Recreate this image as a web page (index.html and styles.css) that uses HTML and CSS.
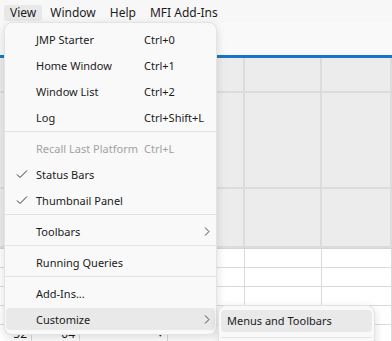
FILE: index.html
```html
<!DOCTYPE html>
<html lang="en">

<head>
    <meta charset="UTF-8">
    <meta name="viewport" content="width=device-width, initial-scale=1.0">
    <title>View menu</title>
    <link rel="stylesheet" href="styles.css">
</head>

<body>
    <div class="app">
        <div class="menubar">
            <span class="bar-item active">View</span>
            <span class="bar-item">Window</span>
            <span class="bar-item">Help</span>
            <span class="bar-item">MFI Add-Ins</span>
        </div>
        <div class="toolbar"></div>
        <div class="accent"></div>

        <div class="table">
            <div class="head">
                <div class="hcell"></div><div class="hcell"></div><div class="hcell"></div>
                <div class="hcell"></div><div class="hcell"></div><div class="hcell"></div>
                <div class="hcell"></div><div class="hcell"></div><div class="hcell"></div>
            </div>
            <div class="rows">
                <div class="row"><span></span><span></span><span></span><span></span><span></span><span></span></div>
                <div class="row"><span></span><span></span><span></span><span></span><span></span><span></span></div>
                <div class="row"><span></span><span></span><span></span><span></span><span></span><span></span></div>
                <div class="row"><span></span><span></span><span></span><span></span><span></span><span></span></div>
                <div class="row"><span class="num">52</span><span class="num">04</span><span class="drop">&#9662;</span><span></span><span></span><span></span></div>
            </div>
        </div>

        <div class="menu">
            <div class="item"><span class="mark"></span><span class="label">JMP Starter</span><span class="key">Ctrl+0</span></div>
            <div class="item"><span class="mark"></span><span class="label">Home Window</span><span class="key">Ctrl+1</span></div>
            <div class="item"><span class="mark"></span><span class="label">Window List</span><span class="key">Ctrl+2</span></div>
            <div class="item"><span class="mark"></span><span class="label">Log</span><span class="key">Ctrl+Shift+L</span></div>
            <div class="sep"></div>
            <div class="item disabled"><span class="mark"></span><span class="label">Recall Last Platform</span><span class="key">Ctrl+L</span></div>
            <div class="item">
                <span class="mark"><svg width="12" height="10" viewBox="0 0 12 10"><polyline points="1,5.5 4,8.5 11,1.5" fill="none" stroke="#333" stroke-width="1"/></svg></span>
                <span class="label">Status Bars</span><span class="key"></span>
            </div>
            <div class="item">
                <span class="mark"><svg width="12" height="10" viewBox="0 0 12 10"><polyline points="1,5.5 4,8.5 11,1.5" fill="none" stroke="#333" stroke-width="1"/></svg></span>
                <span class="label">Thumbnail Panel</span><span class="key"></span>
            </div>
            <div class="sep"></div>
            <div class="item">
                <span class="mark"></span><span class="label">Toolbars</span><span class="key"></span>
                <span class="arrow"><svg width="6" height="9" viewBox="0 0 6 9"><polyline points="1,0.5 5,4.5 1,8.5" fill="none" stroke="#444" stroke-width="1"/></svg></span>
            </div>
            <div class="sep"></div>
            <div class="item"><span class="mark"></span><span class="label">Running Queries</span><span class="key"></span></div>
            <div class="sep"></div>
            <div class="item"><span class="mark"></span><span class="label">Add-Ins...</span><span class="key"></span></div>
            <div class="item hover">
                <span class="mark"></span><span class="label">Customize</span><span class="key"></span>
                <span class="arrow"><svg width="6" height="9" viewBox="0 0 6 9"><polyline points="1,0.5 5,4.5 1,8.5" fill="none" stroke="#444" stroke-width="1"/></svg></span>
            </div>
        </div>

        <div class="submenu">
            <div class="sub-item hover">Menus and Toolbars</div>
            <div class="sub-sep"></div>
        </div>
    </div>
</body>

</html>
```

FILE: styles.css
```css
* {
    box-sizing: border-box;
}

body {
    margin: 0;
    background: #fafafa;
    font-family: "Segoe UI", "Noto Sans", sans-serif;
    font-size: 11px;
    color: #1b1b1b;
}

.app {
    position: relative;
    width: 392px;
    height: 341px;
    overflow: hidden;
}

.menubar {
    height: 22px;
    padding: 5px 0 0 4px;
    display: flex;
    gap: 2px;
    font-size: 12px;
    background: #f7f7f7;
}

.bar-item {
    height: 16px;
    line-height: 16px;
    padding: 0 6px;
    border-radius: 3px;
}

.bar-item.active {
    background: #e8e8e8;
}

.toolbar {
    height: 33px;
    background: #f9f9f9;
}

.accent {
    height: 3px;
    background: #1b74c9;
}

.head {
    display: grid;
    grid-template-columns: 245px 77px 1fr;
    grid-template-rows: 35px 96px 59px;
    background: #ececec;
    border-bottom: 1px solid #d4d4d4;
}

.hcell {
    border-right: 2px solid #dcdcdc;
    border-bottom: 2px solid #dcdcdc;
}

.row {
    display: grid;
    grid-template-columns: 32px 48px 88px 77px 77px 1fr;
    height: 19px;
    background: #fff;
    font-size: 12px;
}

.row span {
    border-right: 1px solid #dadada;
    border-bottom: 1px solid #dadada;
    padding: 0 4px;
    line-height: 18px;
    text-align: right;
}

.row .drop {
    font-size: 9px;
}

.menu {
    position: absolute;
    left: 4px;
    top: 22px;
    width: 213px;
    padding: 4px 0 1px;
    display: flex;
    flex-direction: column;
    background: #f9f9f9;
    border: 1px solid #e3e3e3;
    border-radius: 8px;
    box-shadow: 0 3px 10px rgba(0, 0, 0, 0.14);
}

.item {
    position: relative;
    display: flex;
    align-items: center;
    height: 22px;
    margin: 1px 1px 3px;
    border-radius: 4px;
    white-space: nowrap;
}

.item.hover {
    background: #e9e9e9;
}

.mark {
    width: 30px;
    flex-shrink: 0;
    display: flex;
    justify-content: center;
    padding-left: 2px;
}

.label {
    width: 108px;
    flex-shrink: 0;
}

.key {
    flex: 1;
}

.item.disabled {
    color: #a2a2a2;
}

.arrow {
    position: absolute;
    right: 5px;
    top: 7px;
    display: flex;
}

.sep {
    height: 1px;
    margin: 0 0 4px;
    background: #e4e4e4;
}

.submenu {
    position: absolute;
    left: 218px;
    top: 305px;
    width: 157px;
    height: 60px;
    padding: 4px 2px;
    display: flex;
    flex-direction: column;
    background: #f9f9f9;
    border: 1px solid #e3e3e3;
    border-radius: 8px;
    box-shadow: 0 3px 10px rgba(0, 0, 0, 0.14);
}

.sub-item {
    height: 22px;
    line-height: 22px;
    padding-left: 6px;
    border-radius: 4px;
}

.sub-item.hover {
    background: #e9e9e9;
}

.sub-sep {
    height: 1px;
    margin: 5px 0 0;
    background: #e4e4e4;
}
```
